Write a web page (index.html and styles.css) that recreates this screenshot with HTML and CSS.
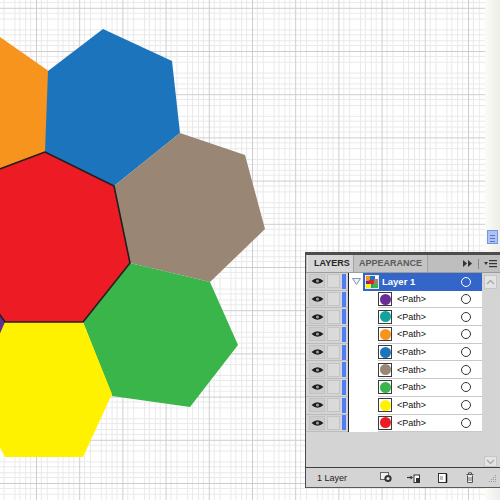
FILE: index.html
```html
<!DOCTYPE html>
<html>
<head>
<meta charset="utf-8">
<link rel="stylesheet" href="styles.css">
</head>
<body>
<div class="workspace">
  <svg class="art" width="500" height="500" viewBox="0 0 500 500">
    <defs>
      <pattern id="grid" x="-7.2" y="7.8" width="43.2" height="43.2" patternUnits="userSpaceOnUse">
        <rect width="43.2" height="43.2" fill="#ffffff"/>
        <g fill="#e9e9e9" shape-rendering="crispEdges">
          <rect x="5.4" y="0" width="0.9" height="43.2"/>
          <rect x="10.8" y="0" width="0.9" height="43.2"/>
          <rect x="16.2" y="0" width="0.9" height="43.2"/>
          <rect x="21.6" y="0" width="0.9" height="43.2"/>
          <rect x="27" y="0" width="0.9" height="43.2"/>
          <rect x="32.4" y="0" width="0.9" height="43.2"/>
          <rect x="37.8" y="0" width="0.9" height="43.2"/>
          <rect y="5.4" x="0" height="0.9" width="43.2"/>
          <rect y="10.8" x="0" height="0.9" width="43.2"/>
          <rect y="16.2" x="0" height="0.9" width="43.2"/>
          <rect y="21.6" x="0" height="0.9" width="43.2"/>
          <rect y="27" x="0" height="0.9" width="43.2"/>
          <rect y="32.4" x="0" height="0.9" width="43.2"/>
          <rect y="37.8" x="0" height="0.9" width="43.2"/>
        </g>
        <g fill="#cdcdcd" shape-rendering="crispEdges">
          <rect x="0" y="0" width="0.9" height="43.2"/>
          <rect x="0" y="0" width="43.2" height="0.9"/>
        </g>
      </pattern>
    </defs>
    <rect width="500" height="500" fill="url(#grid)"/>
    <polygon points="-60,10 0,37 50,72 47,152 0,169 -60,150" fill="#f7941d"/>
    <polygon points="48,71 103,29 172,61 180,133 114,186 45,152" fill="#1c75bc"/>
    <polygon points="114,186 180,133 245,155 265,229 210,282 130,263" fill="#998675"/>
    <polygon points="130,263 210,282 238,345 190,407 112,396 83,322" fill="#39b54a"/>
    <polygon points="3,322 83,322 112,394 83,457 5,457 -30,390" fill="#fff200"/>
    <polygon points="-40,290 -5,300 5,322 -5,345 -40,345" fill="#662d91"/>
    <polygon points="45,152 114,186 130,263 83,322 5,322 -35,265 -30,180" fill="#ed1c24" stroke="#231f20" stroke-width="1.6" stroke-linejoin="round"/>
  </svg>

  <div class="edge-strip">
    <div class="doc-icon"><span></span><span></span><span></span></div>
  </div>

  <div class="panel">
    <div class="panel-top"></div>
    <div class="tabs">
      <div class="tab active">LAYERS</div>
      <div class="tab">APPEARANCE</div>
      <div class="tab-tools">
        <svg width="10" height="7" viewBox="0 0 10 7"><polygon points="0,0 4,3.5 0,7" fill="#333"/><polygon points="5,0 9,3.5 5,7" fill="#333"/></svg>
        <span class="tool-sep"></span>
        <svg width="13" height="9" viewBox="0 0 13 9"><polygon points="0,3 4,3 2,6" fill="#333"/><rect x="5" y="1" width="8" height="1.2" fill="#333"/><rect x="5" y="4" width="8" height="1.2" fill="#333"/><rect x="5" y="7" width="8" height="1.2" fill="#333"/></svg>
      </div>
    </div>

    <div class="list">
      <div class="rows">
        <div class="row">
          <div class="ctrl"><span class="eye"><svg width="13" height="8" viewBox="0 0 13 8"><path d="M0.5 4 Q6.5 -1.5 12.5 4 Q6.5 9.5 0.5 4Z" fill="#1c1c1c"/><circle cx="6.5" cy="4" r="1.6" fill="#9a9a9a"/></svg></span><span class="lock"></span><span class="bar"></span></div>
          <div class="vline"></div>
          <div class="item">
            <span class="twisty"><svg width="9" height="7" viewBox="0 0 9 7"><polygon points="0.5,0.5 8.5,0.5 4.5,6.5" fill="#eef2f8" stroke="#8595b0" stroke-width="1"/></svg></span>
            <div class="hl">
              <span class="lthumb"><svg width="12" height="12" viewBox="0 0 12 12">
                <rect width="12" height="12" fill="#fff"/>
                <rect x="0" y="0" width="4" height="5" fill="#f7941d"/>
                <rect x="4" y="0" width="5" height="4" fill="#1c75bc"/>
                <rect x="8" y="3" width="4" height="5" fill="#998675"/>
                <rect x="3" y="4" width="5" height="4" fill="#ed1c24"/>
                <rect x="0" y="5" width="3" height="3" fill="#662d91"/>
                <rect x="0" y="8" width="5" height="4" fill="#fff200"/>
                <rect x="7" y="8" width="5" height="4" fill="#39b54a"/>
                <rect x="5" y="8" width="2" height="4" fill="#14a09a"/>
              </svg></span>
              <span class="lname">Layer 1</span>
              <span class="target light"></span>
            </div>
          </div>
        </div>

        <div class="row">
          <div class="ctrl"><span class="eye"><svg width="13" height="8" viewBox="0 0 13 8"><path d="M0.5 4 Q6.5 -1.5 12.5 4 Q6.5 9.5 0.5 4Z" fill="#1c1c1c"/><circle cx="6.5" cy="4" r="1.6" fill="#9a9a9a"/></svg></span><span class="lock"></span><span class="bar"></span></div>
          <div class="vline"></div>
          <div class="item sub-item"><div class="sub"><span class="pthumb"><span class="dot purple"></span></span><span class="pname">&lt;Path&gt;</span><span class="target"></span></div></div>
        </div>

        <div class="row">
          <div class="ctrl"><span class="eye"><svg width="13" height="8" viewBox="0 0 13 8"><path d="M0.5 4 Q6.5 -1.5 12.5 4 Q6.5 9.5 0.5 4Z" fill="#1c1c1c"/><circle cx="6.5" cy="4" r="1.6" fill="#9a9a9a"/></svg></span><span class="lock"></span><span class="bar"></span></div>
          <div class="vline"></div>
          <div class="item sub-item"><div class="sub"><span class="pthumb"><span class="dot teal"></span></span><span class="pname">&lt;Path&gt;</span><span class="target"></span></div></div>
        </div>

        <div class="row">
          <div class="ctrl"><span class="eye"><svg width="13" height="8" viewBox="0 0 13 8"><path d="M0.5 4 Q6.5 -1.5 12.5 4 Q6.5 9.5 0.5 4Z" fill="#1c1c1c"/><circle cx="6.5" cy="4" r="1.6" fill="#9a9a9a"/></svg></span><span class="lock"></span><span class="bar"></span></div>
          <div class="vline"></div>
          <div class="item sub-item"><div class="sub"><span class="pthumb"><span class="dot orange"></span></span><span class="pname">&lt;Path&gt;</span><span class="target"></span></div></div>
        </div>

        <div class="row">
          <div class="ctrl"><span class="eye"><svg width="13" height="8" viewBox="0 0 13 8"><path d="M0.5 4 Q6.5 -1.5 12.5 4 Q6.5 9.5 0.5 4Z" fill="#1c1c1c"/><circle cx="6.5" cy="4" r="1.6" fill="#9a9a9a"/></svg></span><span class="lock"></span><span class="bar"></span></div>
          <div class="vline"></div>
          <div class="item sub-item"><div class="sub"><span class="pthumb"><span class="dot blue"></span></span><span class="pname">&lt;Path&gt;</span><span class="target"></span></div></div>
        </div>

        <div class="row">
          <div class="ctrl"><span class="eye"><svg width="13" height="8" viewBox="0 0 13 8"><path d="M0.5 4 Q6.5 -1.5 12.5 4 Q6.5 9.5 0.5 4Z" fill="#1c1c1c"/><circle cx="6.5" cy="4" r="1.6" fill="#9a9a9a"/></svg></span><span class="lock"></span><span class="bar"></span></div>
          <div class="vline"></div>
          <div class="item sub-item"><div class="sub"><span class="pthumb"><span class="dot taupe"></span></span><span class="pname">&lt;Path&gt;</span><span class="target"></span></div></div>
        </div>

        <div class="row">
          <div class="ctrl"><span class="eye"><svg width="13" height="8" viewBox="0 0 13 8"><path d="M0.5 4 Q6.5 -1.5 12.5 4 Q6.5 9.5 0.5 4Z" fill="#1c1c1c"/><circle cx="6.5" cy="4" r="1.6" fill="#9a9a9a"/></svg></span><span class="lock"></span><span class="bar"></span></div>
          <div class="vline"></div>
          <div class="item sub-item"><div class="sub"><span class="pthumb"><span class="dot green"></span></span><span class="pname">&lt;Path&gt;</span><span class="target"></span></div></div>
        </div>

        <div class="row">
          <div class="ctrl"><span class="eye"><svg width="13" height="8" viewBox="0 0 13 8"><path d="M0.5 4 Q6.5 -1.5 12.5 4 Q6.5 9.5 0.5 4Z" fill="#1c1c1c"/><circle cx="6.5" cy="4" r="1.6" fill="#9a9a9a"/></svg></span><span class="lock"></span><span class="bar"></span></div>
          <div class="vline"></div>
          <div class="item sub-item"><div class="sub"><span class="pthumb"><span class="dot yellow"></span></span><span class="pname">&lt;Path&gt;</span><span class="target"></span></div></div>
        </div>

        <div class="row">
          <div class="ctrl"><span class="eye"><svg width="13" height="8" viewBox="0 0 13 8"><path d="M0.5 4 Q6.5 -1.5 12.5 4 Q6.5 9.5 0.5 4Z" fill="#1c1c1c"/><circle cx="6.5" cy="4" r="1.6" fill="#9a9a9a"/></svg></span><span class="lock"></span><span class="bar"></span></div>
          <div class="vline"></div>
          <div class="item sub-item"><div class="sub"><span class="pthumb"><span class="dot red"></span></span><span class="pname">&lt;Path&gt;</span><span class="target"></span></div></div>
        </div>

        <div class="filler"></div>
      </div>
      <div class="scroll">
        <div class="sbtn"><svg width="9" height="6" viewBox="0 0 9 6"><polyline points="1,5 4.5,1.5 8,5" fill="none" stroke="#a8a8a8" stroke-width="1.3"/></svg></div>
        <div class="sbtn down"><svg width="9" height="6" viewBox="0 0 9 6"><polyline points="1,1 4.5,4.5 8,1" fill="none" stroke="#a8a8a8" stroke-width="1.3"/></svg></div>
      </div>
    </div>

    <div class="foot">
      <span class="count">1 Layer</span>
      <span class="ficon"><svg width="13" height="11" viewBox="0 0 13 11"><rect x="0.5" y="0.5" width="8" height="7" fill="#f2f2f2" stroke="#666"/><circle cx="8" cy="6.5" r="3.6" fill="#333"/><circle cx="8" cy="6.5" r="1.6" fill="#e6e6e6"/></svg></span>
      <span class="ficon"><svg width="13" height="10" viewBox="0 0 13 10"><path d="M0 4.5 H4" stroke="#333" stroke-width="1.2"/><polygon points="3.5,2.5 6,4.5 3.5,6.5" fill="#333"/><rect x="7" y="2" width="5.5" height="7.5" fill="#fff" stroke="#333"/><rect x="9" y="5" width="3" height="4" fill="#333"/></svg></span>
      <span class="ficon"><svg width="10" height="11" viewBox="0 0 10 11"><rect x="0.5" y="1.5" width="8" height="9" fill="#fff" stroke="#333"/><rect x="2" y="4" width="3" height="4" fill="#bbb"/><path d="M8.5 10.5 V2" stroke="#111" stroke-width="1.5"/></svg></span>
      <span class="ficon"><svg width="8" height="11" viewBox="0 0 8 11"><path d="M0.5 2.5 H7.5 M2.5 2.5 V0.8 H5.5 V2.5" fill="none" stroke="#555"/><path d="M1.5 3.5 V10.5 H6.5 V3.5" fill="#eee" stroke="#555"/><path d="M3 5 V9 M5 5 V9" stroke="#777"/></svg></span>
      <span class="grip"><svg width="10" height="10" viewBox="0 0 10 10"><g fill="#9a9a9a"><rect x="8" y="2" width="1" height="1"/><rect x="6" y="4" width="1" height="1"/><rect x="8" y="4" width="1" height="1"/><rect x="4" y="6" width="1" height="1"/><rect x="6" y="6" width="1" height="1"/><rect x="8" y="6" width="1" height="1"/><rect x="2" y="8" width="1" height="1"/><rect x="4" y="8" width="1" height="1"/><rect x="6" y="8" width="1" height="1"/><rect x="8" y="8" width="1" height="1"/></g></svg></span>
    </div>
  </div>
</div>
</body>
</html>
```
FILE: styles.css
```css
body {
  margin: 0;
}

.workspace {
  position: relative;
  width: 500px;
  height: 500px;
  overflow: hidden;
  background: #ffffff;
  font-family: "Liberation Sans", Arial, sans-serif;
}

.art {
  display: block;
}

.edge-strip {
  position: absolute;
  left: 485px;
  top: 0;
  width: 15px;
  height: 500px;
  background: linear-gradient(to right, #fbfbf9, #eeede7);
}

.doc-icon {
  position: absolute;
  left: 2px;
  top: 230px;
  width: 11px;
  height: 14px;
  box-sizing: border-box;
  background: #aec3f4;
  border: 1px solid #7595e2;
  padding: 4px 2px 0 2px;
  display: flex;
  flex-direction: column;
  gap: 2px;
}

.doc-icon span {
  display: block;
  height: 1px;
  background: #5676d0;
}

.panel {
  position: absolute;
  left: 305px;
  top: 252px;
  width: 195px;
  height: 236px;
  box-sizing: border-box;
  background: #d4d4d4;
  border-left: 1px solid #4a4a4a;
  border-bottom: 1px solid #5a5a5a;
  display: flex;
  flex-direction: column;
}

.panel-top {
  height: 3px;
  background: #4d4d4d;
  flex: none;
}

.tabs {
  height: 17px;
  flex: none;
  display: flex;
  background: #bebebe;
  border-bottom: 1px solid #9c9c9c;
}

.tab {
  font-size: 9px;
  font-weight: bold;
  line-height: 17px;
  padding: 0 5px;
  color: #5a5a5a;
  background: #c4c4c4;
  border-right: 1px solid #a2a2a2;
}

.tab.active {
  margin-left: 1px;
  width: 47px;
  box-sizing: border-box;
  padding: 0 0 0 6px;
  color: #262626;
  background: #d6d6d6;
  border-left: 1px solid #e6e6e6;
}

.tab-tools {
  margin-left: auto;
  display: flex;
  align-items: center;
  gap: 5px;
  padding-right: 3px;
}

.tool-sep {
  width: 1px;
  height: 10px;
  background: #8a8a8a;
}

.list {
  height: 194px;
  flex: none;
  display: flex;
}

.rows {
  width: 176px;
  display: flex;
  flex-direction: column;
}

.row {
  display: flex;
  height: 17.7px;
  flex: none;
}

.ctrl {
  width: 42px;
  box-sizing: border-box;
  display: flex;
  align-items: center;
  gap: 2px;
  padding-left: 3px;
  background: #d4d4d4;
  border-bottom: 1px solid #bcbcbc;
}

.eye {
  width: 16px;
  height: 14px;
  box-sizing: border-box;
  background: #cdcdcd;
  border: 1px solid #c2c2c2;
  display: flex;
  align-items: center;
  justify-content: center;
}

.lock {
  width: 13px;
  height: 14px;
  box-sizing: border-box;
  background: #dadada;
  border: 1px solid #c4c4c4;
}

.bar {
  width: 4px;
  height: 15px;
  background: #4d7ef6;
}

.vline {
  width: 1px;
  background: #1e1e1e;
}

.item {
  flex: 1;
  display: flex;
  background: #ffffff;
}

.twisty {
  width: 14px;
  display: flex;
  align-items: center;
  justify-content: center;
}

.hl {
  flex: 1;
  display: flex;
  align-items: center;
  padding-left: 2px;
  background: #3366c8;
}

.lthumb {
  width: 14px;
  height: 14px;
  box-sizing: border-box;
  border: 1px solid #e8e8e8;
  display: flex;
}

.lname {
  margin-left: 3px;
  font-size: 9.5px;
  font-weight: bold;
  color: #ffffff;
}

.target {
  margin-left: auto;
  margin-right: 11px;
  width: 10px;
  height: 10px;
  box-sizing: border-box;
  border-radius: 50%;
  border: 1px solid #333333;
  background: #ffffff;
}

.target.light {
  border: 1px solid #ffffff;
  background: transparent;
}

.sub-item {
  padding-left: 29px;
}

.sub {
  flex: 1;
  display: flex;
  align-items: center;
  border-bottom: 1px solid #c9c9c9;
}

.pthumb {
  width: 14px;
  height: 14px;
  box-sizing: border-box;
  border: 1px solid #3a3a3a;
  background: #ffffff;
  display: flex;
  align-items: center;
  justify-content: center;
}

.dot {
  width: 11px;
  height: 11px;
  border-radius: 50%;
}

.purple { background: #6a2d98; }
.teal { background: #12a39b; }
.orange { background: #f7941d; }
.blue { background: #1c75bc; }
.taupe { background: #998675; }
.green { background: #39b54a; }
.yellow { background: #fff200; }
.red { background: #ed1c24; }

.pname {
  margin-left: 5px;
  font-size: 9px;
  color: #111111;
}

.filler {
  flex: 1;
  background: #d4d4d4;
}

.scroll {
  width: 18px;
  display: flex;
  flex-direction: column;
  background: #d4d4d4;
}

.sbtn {
  width: 13px;
  height: 14px;
  box-sizing: border-box;
  margin: 2px 0 0 2px;
  background: #e4e4e4;
  border: 1px solid #c6c6c6;
  display: flex;
  align-items: center;
  justify-content: center;
}

.sbtn.down {
  margin-top: auto;
  margin-bottom: 0;
  height: 11px;
}

.foot {
  flex: 1;
  border-top: 1px solid #3e3e3e;
  display: grid;
  grid-template-columns: 63px 27px 31px 28px 21px 12px;
  align-items: center;
  padding-left: 11px;
}

.count {
  font-size: 9px;
  color: #222222;
}

.ficon,
.grip {
  display: flex;
  align-items: center;
}
```
